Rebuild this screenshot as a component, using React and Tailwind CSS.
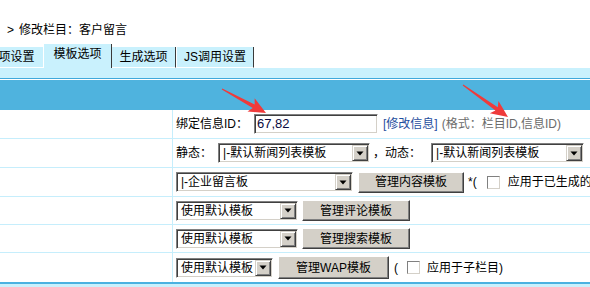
import React from "react";

const Arrow = () => (
  <svg width="8" height="5" viewBox="0 0 8 5"><path d="M0.5 0.5 H7.5 L4 4.5 Z" fill="#000" /></svg>
);

const Sel = ({ className, children }) => (
  <div className={`flex shrink-0 items-center h-[20px] bg-white border border-t-[#808080] border-l-[#808080] border-b-white border-r-white shadow-[inset_1px_1px_0_#404040,inset_-1px_-1px_0_#d4d0c8] ${className}`}>
    <span className="flex-1 pl-[4px] whitespace-nowrap overflow-hidden leading-[16px]">{children}</span>
    <span className="mr-[1px] w-[16px] h-[16px] shrink-0 flex items-center justify-center bg-[#d4d0c8] border border-t-[#d4d0c8] border-l-[#d4d0c8] border-b-[#404040] border-r-[#404040] shadow-[inset_1px_1px_0_#fff,inset_-1px_-1px_0_#808080]">
      <Arrow />
    </span>
  </div>
);

const Btn = ({ className, children }) => (
  <div className={`flex shrink-0 items-center justify-center bg-[#d4d0c8] border border-t-white border-l-white border-b-[#404040] border-r-[#404040] shadow-[inset_-1px_-1px_0_#808080] whitespace-nowrap leading-[14px] ${className}`}>
    {children}
  </div>
);

const Check = () => (
  <span className="inline-block w-[13px] h-[13px] bg-white border border-t-[#808080] border-l-[#808080] border-b-[#d4d0c8] border-r-[#d4d0c8]" />
);

const Row = ({ className, children }) => (
  <div className={`flex border-b border-[#c6eefc] ${className}`}>
    <div className="w-[173px] shrink-0 border-r border-[#c6eefc]" />
    <div className="flex-1 flex items-center pl-[3px] whitespace-nowrap overflow-hidden *:shrink-0">{children}</div>
  </div>
);

export default function App() {
  return (
    <div className="relative w-[590px] h-[287px] overflow-hidden bg-white text-black text-[12px] leading-[14px] font-['Liberation_Sans','Noto_Sans_CJK_SC',sans-serif]">
      {/* breadcrumb */}
      <div className="h-[44px] pt-[23px] pl-[7px] flex">
        <span>&gt;</span>
        <span className="ml-[5px]">修改栏目：客户留言</span>
      </div>

      {/* tabs */}
      <div className="flex items-end h-[24px] ml-[-22px] *:shrink-0">
        <div className="w-[66px] h-[21px] bg-[#c9f1fd] border-r border-b border-white flex justify-center pt-[3px] whitespace-nowrap">选项设置</div>
        <div className="w-[68px] h-[24px] bg-[#c9f1fd] border-r border-[#3a3a3a] flex justify-center pt-[3px] whitespace-nowrap">模板选项</div>
        <div className="w-[64px] h-[21px] bg-[#c9f1fd] border-r border-r-[#3a3a3a] border-b border-b-white flex justify-center pt-[3px] whitespace-nowrap">生成选项</div>
        <div className="w-[78px] h-[21px] bg-[#c9f1fd] border-l border-l-white border-r border-r-[#3a3a3a] border-b border-b-white flex justify-center pt-[3px] whitespace-nowrap">JS调用设置</div>
      </div>
      <div className="h-[10px] bg-[#c9f1fd]" />
      <div className="h-px bg-[#3fa9dc]" />
      <div className="h-px bg-white" />
      <div className="h-[30px] bg-[#4fb3de]" />

      {/* rows */}
      <Row className="h-[29px]">
        <span>绑定信息ID：</span>
        <div className="ml-[6px] w-[124px] h-[20px] flex items-center pl-[2px] bg-white border border-t-[#808080] border-l-[#808080] border-b-white border-r-white shadow-[inset_1px_1px_0_#404040,inset_-1px_-1px_0_#d4d0c8] text-[13px] text-[#0a0a40]">67,82</div>
        <span className="ml-[5px] text-[#1f4e9e]">[修改信息]</span>
        <span className="ml-[4px] text-[#6b6b6b]">(格式：栏目ID,信息ID)</span>
      </Row>
      <Row className="h-[29px]">
        <span>静态：</span>
        <Sel className="ml-[6px] w-[152px]">|-默认新闻列表模板</Sel>
        <span className="ml-[3px]">，动态：</span>
        <Sel className="ml-[10px] w-[153px]">|-默认新闻列表模板</Sel>
      </Row>
      <Row className="h-[29px]">
        <Sel className="w-[177px]">|-企业留言板</Sel>
        <Btn className="ml-[5px] w-[106px] h-[21px]">管理内容模板</Btn>
        <span className="ml-[4px]">*(</span>
        <span className="ml-[10px] flex"><Check /></span>
        <span className="ml-[8px]">应用于已生成的信息</span>
      </Row>
      <Row className="h-[28px]">
        <Sel className="w-[122px]">使用默认模板</Sel>
        <Btn className="ml-[4px] w-[108px] h-[21px]">管理评论模板</Btn>
      </Row>
      <Row className="h-[28px]">
        <Sel className="w-[122px]">使用默认模板</Sel>
        <Btn className="ml-[4px] w-[108px] h-[21px]">管理搜索模板</Btn>
      </Row>
      <Row className="h-[29px] border-b-0">
        <Sel className="w-[97px]">使用默认模板</Sel>
        <Btn className="ml-[5px] w-[111px] h-[23px]">管理WAP模板</Btn>
        <span className="ml-[5px]">(</span>
        <span className="ml-[9px] flex"><Check /></span>
        <span className="ml-[7px]">应用于子栏目)</span>
      </Row>
      <div className="h-[2px] bg-[#4ab1e0]" />
      <div className="h-[10px] bg-[#c9f1fd]" />

      {/* annotation arrows */}
      <svg className="absolute left-0 top-0 pointer-events-none" width="590" height="287" viewBox="0 0 590 287">
        <polygon fill="#ef3b3b" points="221.76,89.44 252.74,108.06 247.48,111.45 266,113 254.66,98.27 254.66,104.54 222.24,88.56" />
        <polygon fill="#ef3b3b" points="462.71,85.41 495.43,110.51 489.79,113.25 508,117 498.49,101.03 497.75,107.25 463.29,84.59" />
      </svg>
    </div>
  );
}
